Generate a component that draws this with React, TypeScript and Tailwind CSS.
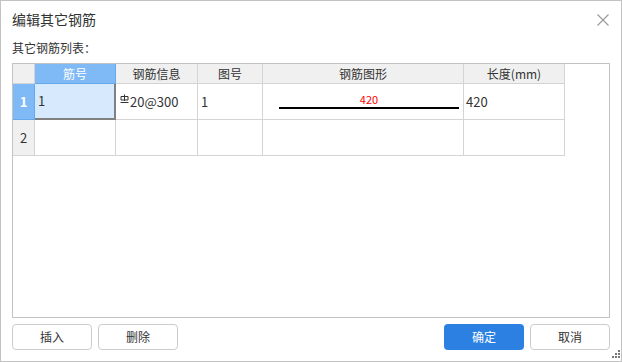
const font = { fontFamily: '"Microsoft YaHei", "Noto Sans CJK SC", "Noto Sans", sans-serif' };

const cols = [
  { key: "no", title: "筋号", w: "w-[81px]" },
  { key: "info", title: "钢筋信息", w: "w-[82px]" },
  { key: "fig", title: "图号", w: "w-[65px]" },
  { key: "shape", title: "钢筋图形", w: "w-[201px]" },
  { key: "len", title: "长度(mm)", w: "w-[101px]" },
];

// HRB400 rebar grade sign drawn small, like a superscript
const RebarSign = () => (
  <svg width="9" height="10" viewBox="0 0 9 10" className="mb-[5px] mr-[1px]">
    <path d="M1 2.5h7v3.5h-7z M4.5 0.5v6.5 M0.5 8.5h8" fill="none" stroke="#333" strokeWidth="1" />
  </svg>
);

const Btn = ({ label, primary = false }: { label: string; primary?: boolean }) => (
  <button
    className={
      primary
        ? "w-[80px] h-[26px] rounded-[4px] bg-[#2c80e2] text-white text-[12px]"
        : "w-[80px] h-[26px] rounded-[4px] border border-[#cccccc] bg-white text-[#333] text-[12px]"
    }
  >
    {label}
  </button>
);

export default function App() {
  return (
    <div
      className="relative w-[622px] h-[362px] border border-[#c3c3c3] bg-white flex flex-col text-[#333]"
      style={font}
    >
      {/* title */}
      <div className="h-[37px] flex items-center justify-between pl-[11px] pr-[12px]">
        <span className="text-[14px]">编辑其它钢筋</span>
        <svg width="12" height="12" viewBox="0 0 12 12" className="mt-[1px]">
          <path d="M0.5 0.5L11.5 11.5M11.5 0.5L0.5 11.5" stroke="#999" strokeWidth="1.1" />
        </svg>
      </div>
      <div className="h-[20px] flex items-center pl-[11px] text-[12px]">其它钢筋列表：</div>

      {/* grid */}
      <div className="mt-[5px] mx-[11px] h-[255px] border border-[#c3c3c3] bg-white">
        {/* header */}
        <div className="flex h-[20px] text-[12px]">
          <div className="w-[22px] bg-[#f0f0f0] border-r border-b border-[#d4d4d4]" />
          {cols.map((c, i) => (
            <div
              key={c.key}
              className={
                i === 0
                  ? `${c.w} flex items-center justify-center bg-[#7fbaf6] border-r border-b border-[#65a8ee] text-white`
                  : `${c.w} flex items-center justify-center bg-[#f0f0f0] border-r border-b border-[#d4d4d4]`
              }
            >
              {c.title}
            </div>
          ))}
        </div>

        {/* row 1 */}
        <div className="flex h-[36px] text-[13px]">
          <div className="w-[22px] flex items-center justify-center bg-[#7fbaf6] border-r border-b border-[#65a8ee] text-white font-bold">
            1
          </div>
          <div className="w-[81px] flex items-center pl-[3px] bg-[#d6e9fd] border-r-2 border-b-2 border-[#808080]">
            1
          </div>
          <div className="w-[82px] flex items-center pl-[4px] border-r border-b border-[#d4d4d4]">
            <RebarSign />
            20@300
          </div>
          <div className="w-[65px] flex items-center pl-[3px] border-r border-b border-[#d4d4d4]">1</div>
          <div className="w-[201px] flex flex-col justify-end pb-[10px] pl-[16px] pr-[4px] border-r border-b border-[#d4d4d4]">
            <div className="text-center text-[11px] leading-[12px] text-[#ff0000] mb-[2px]">420</div>
            <div className="h-[2px] bg-black" />
          </div>
          <div className="w-[101px] flex items-center pl-[2px] border-r border-b border-[#d4d4d4]">420</div>
        </div>

        {/* row 2 */}
        <div className="flex h-[36px] text-[13px]">
          <div className="w-[22px] flex items-center justify-center bg-[#f0f0f0] border-r border-b border-[#d4d4d4]">
            2
          </div>
          {cols.map((c) => (
            <div key={c.key} className={`${c.w} border-r border-b border-[#d4d4d4]`} />
          ))}
        </div>
      </div>

      {/* buttons */}
      <div className="mt-[6px] px-[11px] flex items-center">
        <div className="flex gap-[6px]">
          <Btn label="插入" />
          <Btn label="删除" />
        </div>
        <div className="ml-auto flex gap-[6px]">
          <Btn label="确定" primary />
          <Btn label="取消" />
        </div>
      </div>

      {/* resize grip */}
      <svg width="8" height="8" viewBox="0 0 8 8" className="absolute right-[1px] bottom-[3px]">
        <rect x="6" y="0" width="2" height="2" fill="#777" />
        <rect x="3" y="3" width="2" height="2" fill="#777" />
        <rect x="6" y="3" width="2" height="2" fill="#777" />
        <rect x="0" y="6" width="2" height="2" fill="#777" />
        <rect x="3" y="6" width="2" height="2" fill="#777" />
        <rect x="6" y="6" width="2" height="2" fill="#777" />
      </svg>
    </div>
  );
}
